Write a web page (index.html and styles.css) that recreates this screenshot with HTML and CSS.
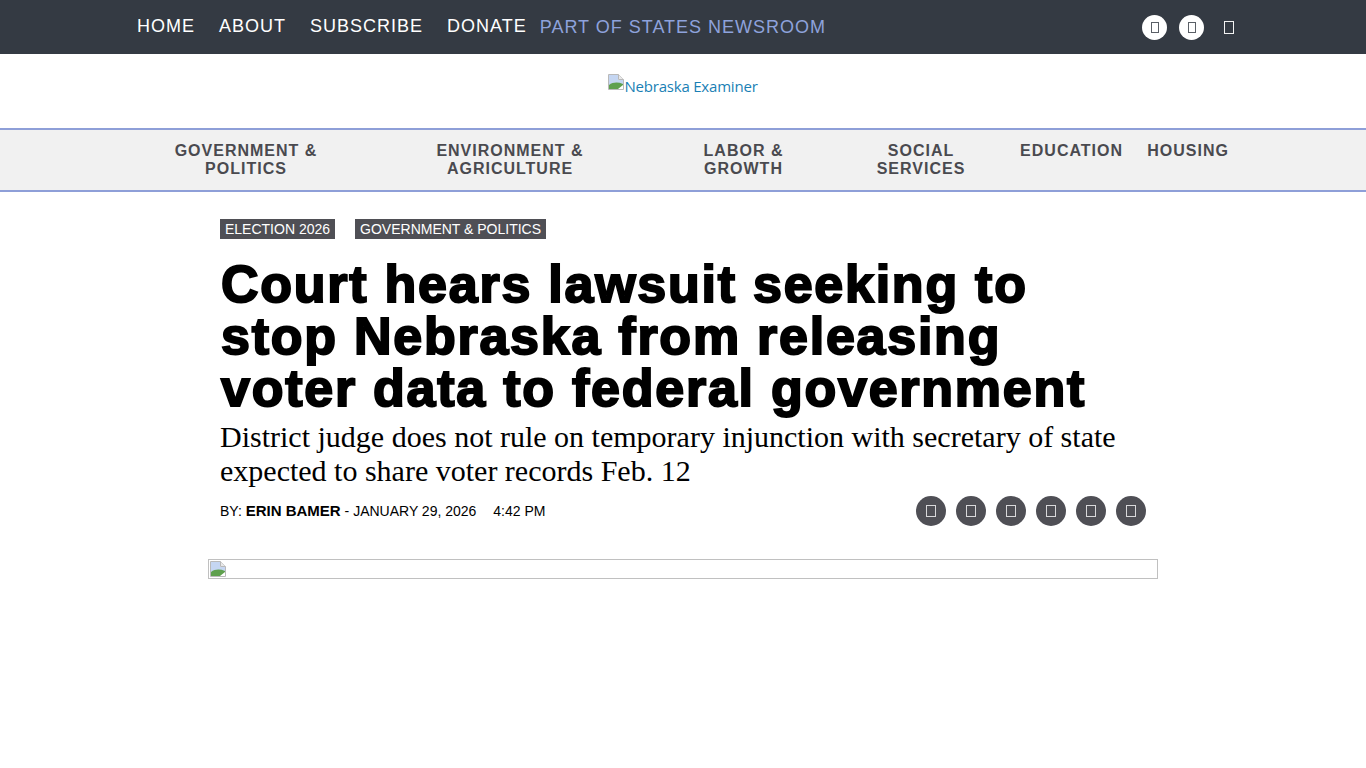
FILE: index.html
```html
<!DOCTYPE html>
<html lang="en">
<head>
    <meta charset="utf-8">
    <title>Court hears lawsuit seeking to stop Nebraska from releasing voter data to federal government</title>
    <link rel="stylesheet" href="styles.css">
</head>
<body>
    <div class="topbar">
        <div class="topbar-inner">
            <a class="top-link" href="#">HOME</a>
            <a class="top-link" href="#">ABOUT</a>
            <a class="top-link" href="#">SUBSCRIBE</a>
            <a class="top-link" href="#">DONATE</a>
            <a class="top-states" href="#">PART OF STATES NEWSROOM</a>
            <div class="top-icons">
                <span class="round-white"><i class="tofu tofu-dark"></i></span>
                <span class="round-white"><i class="tofu tofu-dark"></i></span>
                <span class="plain-icon"><i class="tofu tofu-plain"></i></span>
            </div>
        </div>
    </div>

    <div class="logo-row">
        <a class="logo-link" href="#">
            <svg class="broken" viewBox="0 0 16 16" width="16" height="16">
                <path d="M0.5 0.5H10.5L15.5 5.5V15.5H0.5Z" fill="#fff" stroke="#b9b9b9"/>
                <path d="M10.5 0.5V5.5H15.5" fill="#e8e8e8" stroke="#b9b9b9"/>
                <path d="M1 1H10V6H15V10L1 12Z" fill="#c5d6f2"/>
                <path d="M1 15V11C5 8 10 8 15 10V11L10 15Z" fill="#5fa04e"/>
            </svg>Nebraska Examiner
        </a>
    </div>

    <nav class="mainnav">
        <div class="mainnav-inner">
            <a href="#">GOVERNMENT &amp;<br>POLITICS</a>
            <a href="#">ENVIRONMENT &amp;<br>AGRICULTURE</a>
            <a href="#">LABOR &amp;<br>GROWTH</a>
            <a href="#">SOCIAL<br>SERVICES</a>
            <a href="#">EDUCATION</a>
            <a href="#">HOUSING</a>
        </div>
    </nav>

    <main class="article">
        <div class="tags">
            <a class="tag" href="#">ELECTION 2026</a>
            <a class="tag" href="#">GOVERNMENT &amp; POLITICS</a>
        </div>
        <h1 class="headline">Court hears lawsuit seeking to stop Nebraska from releasing voter data to federal government</h1>
        <h2 class="deck">District judge does not rule on temporary injunction with secretary of state expected to share voter records Feb. 12</h2>
        <div class="meta">
            <p class="byline">BY: <a href="#">ERIN BAMER</a> - JANUARY 29, 2026 <span class="time">4:42 PM</span></p>
            <div class="share">
                <span class="round-dark"><i class="tofu tofu-light"></i></span>
                <span class="round-dark"><i class="tofu tofu-light"></i></span>
                <span class="round-dark"><i class="tofu tofu-light"></i></span>
                <span class="round-dark"><i class="tofu tofu-light"></i></span>
                <span class="round-dark"><i class="tofu tofu-light"></i></span>
                <span class="round-dark"><i class="tofu tofu-light"></i></span>
            </div>
        </div>
    </main>

    <div class="photo">
        <svg class="broken" viewBox="0 0 16 16" width="16" height="16">
            <path d="M0.5 0.5H10.5L15.5 5.5V15.5H0.5Z" fill="#fff" stroke="#b9b9b9"/>
            <path d="M10.5 0.5V5.5H15.5" fill="#e8e8e8" stroke="#b9b9b9"/>
            <path d="M1 1H10V6H15V10L1 12Z" fill="#c5d6f2"/>
            <path d="M1 15V11C5 8 10 8 15 10V11L10 15Z" fill="#5fa04e"/>
        </svg>
    </div>
</body>
</html>
```

FILE: styles.css
```css
body {
    margin: 0;
    background-color: white;
    font-family: "Liberation Sans", Arial, sans-serif;
    color: black;
}

a {
    color: inherit;
    text-decoration: none;
}

.topbar {
    background-color: #343a43;
    height: 54px;
}

.topbar-inner {
    display: flex;
    align-items: center;
    width: 1092px;
    height: 54px;
    margin: 0 auto;
}

.top-link {
    margin-right: 24px;
    margin-bottom: 2px;
    color: white;
    font-size: 18px;
    letter-spacing: 1px;
}

.top-link:nth-child(4) {
    margin-right: 13px;
}

.top-states {
    color: #8ea2dc;
    font-size: 18px;
    letter-spacing: 1px;
}

.top-icons {
    display: flex;
    align-items: center;
    gap: 12px;
    margin-left: auto;
    margin-right: -12px;
}

.round-white {
    display: flex;
    align-items: center;
    justify-content: center;
    width: 25px;
    height: 25px;
    border-radius: 50%;
    background-color: white;
}

.plain-icon {
    display: flex;
    align-items: center;
    justify-content: center;
    width: 25px;
    height: 25px;
}

.tofu {
    display: block;
    box-sizing: border-box;
    width: 10px;
    height: 12px;
    border: 1px solid;
}

.tofu-dark {
    width: 8px;
    height: 11px;
    border-color: #5a5f66;
}

.tofu-light {
    border-color: #d8d8da;
}

.tofu-plain {
    height: 13px;
    border-color: #f2f2f2;
}

.logo-row {
    display: flex;
    justify-content: center;
    height: 74px;
    padding-top: 20px;
    box-sizing: border-box;
}

.logo-link {
    height: 24px;
    color: #1a7fb5;
    font-family: "Open Sans", sans-serif;
    font-size: 15px;
    letter-spacing: -0.2px;
    line-height: 24px;
}

.broken {
    display: inline-block;
    vertical-align: top;
}

.mainnav {
    background-color: #f1f1f1;
    border-top: 2px solid #8e9fd8;
    border-bottom: 2px solid #8e9fd8;
    height: 60px;
}

.mainnav-inner {
    display: grid;
    grid-template-columns: 218px 262px 157px 150px auto auto;
    column-gap: 24px;
    width: 1092px;
    margin: 0 auto;
    padding-top: 12px;
}

.mainnav a {
    color: #4a4a4f;
    font-size: 16px;
    font-weight: bold;
    line-height: 18px;
    letter-spacing: 1px;
    text-align: center;
}

.article {
    width: 926px;
    margin: 0 auto;
    padding-top: 27px;
}

.tags {
    display: flex;
    gap: 20px;
}

.tag {
    padding: 0 5px;
    background-color: #4f4f55;
    color: white;
    font-size: 14px;
    line-height: 20px;
}

.headline {
    max-width: 900px;
    margin: 19px 0 0;
    padding-left: 1px;
    font-size: 52px;
    font-weight: bold;
    line-height: 52px;
    letter-spacing: 1.75px;
    -webkit-text-stroke: 2px black;
}

.deck {
    margin: 6px 0 0;
    font-family: "Liberation Serif", "Times New Roman", serif;
    font-size: 30px;
    font-weight: normal;
    line-height: 34px;
}

.meta {
    display: flex;
    align-items: center;
    justify-content: space-between;
    margin-top: 8px;
}

.byline {
    margin: 0 0 2px;
    font-size: 14px;
}

.byline a {
    font-size: 15px;
    font-weight: bold;
}

.time {
    margin-left: 13px;
}

.share {
    display: flex;
    gap: 10px;
}

.round-dark {
    display: flex;
    align-items: center;
    justify-content: center;
    width: 30px;
    height: 30px;
    border-radius: 50%;
    background-color: #4f4f55;
}

.photo {
    box-sizing: border-box;
    width: 950px;
    height: 20px;
    margin: 33px auto 0;
    padding: 1px;
    border: 1px solid #c0c0c0;
    overflow: hidden;
}
```
